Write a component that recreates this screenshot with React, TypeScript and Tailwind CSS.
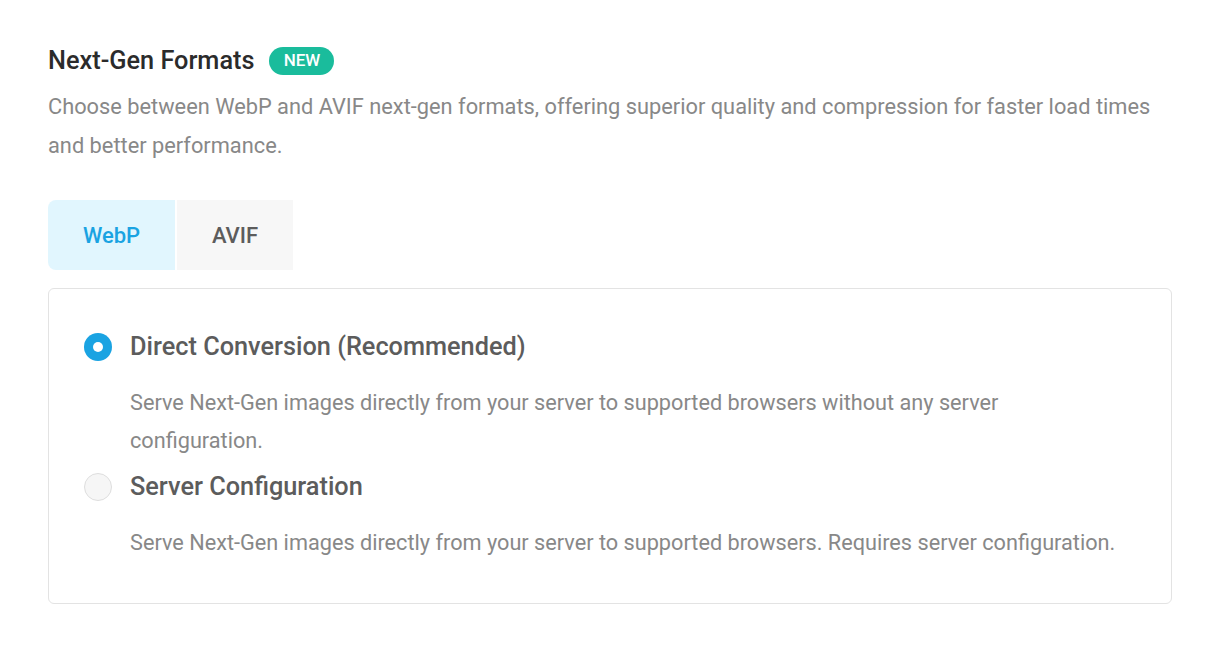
import { useState } from 'react';

type Format = 'webp' | 'avif';
type Mode = 'direct' | 'server';

const options: { id: Mode; label: string; desc: string }[] = [
  {
    id: 'direct',
    label: 'Direct Conversion (Recommended)',
    desc: 'Serve Next-Gen images directly from your server to supported browsers without any server configuration.',
  },
  {
    id: 'server',
    label: 'Server Configuration',
    desc: 'Serve Next-Gen images directly from your server to supported browsers. Requires server configuration.',
  },
];

function Radio({ checked }: { checked: boolean }) {
  return checked ? (
    <span className="flex items-center justify-center w-[28px] h-[28px] rounded-full bg-[#1aa3e2] shrink-0">
      <span className="w-[10px] h-[10px] rounded-full bg-white" />
    </span>
  ) : (
    <span className="w-[28px] h-[28px] rounded-full bg-[#f6f6f6] border border-[#dedede] shrink-0" />
  );
}

export default function App() {
  const [format, setFormat] = useState<Format>('webp');
  const [mode, setMode] = useState<Mode>('direct');

  return (
    <div className="min-h-screen bg-white font-['Roboto',sans-serif] px-[48px] pt-[47px]">
      <div className="flex items-center h-[28px]">
        <h2 className="text-[25.3px] font-medium text-[#2b2b2b] leading-[28px]">Next-Gen Formats</h2>
        <span className="ml-[15px] h-[28px] w-[65px] justify-center rounded-full bg-[#1abc9c] text-white text-[17px] font-medium flex items-center">
          NEW
        </span>
      </div>
      <p className="mt-[12px] text-[21.8px] leading-[39px] text-[#888] max-w-[1124px]">
        Choose between WebP and AVIF next-gen formats, offering superior quality and compression for faster load times and better performance.
      </p>

      <div className="mt-[35px] flex gap-[2px]">
        <button
          onClick={() => setFormat('webp')}
          className={`w-[127px] h-[70px] rounded-l-[8px] text-[22px] font-medium ${format === 'webp' ? 'bg-[#e1f6fe] text-[#1aa3e2]' : 'bg-[#f7f7f7] text-[#5c5c5c]'}`}
        >
          WebP
        </button>
        <button
          onClick={() => setFormat('avif')}
          className={`w-[116px] h-[70px] text-[22px] font-medium ${format === 'avif' ? 'bg-[#e1f6fe] text-[#1aa3e2]' : 'bg-[#f7f7f7] text-[#5c5c5c]'}`}
        >
          AVIF
        </button>
      </div>

      <div className="mt-[18px] w-[1124px] border border-[#e3e3e3] rounded-[6px] pl-[35px] pr-[24px] pt-[44px] pb-[41px]">
        {options.map((o, i) => (
          <div key={o.id} className={i > 0 ? 'mt-[13px]' : ''}>
            <label className="flex items-center gap-[18px] h-[28px] cursor-pointer" onClick={() => setMode(o.id)}>
              <Radio checked={mode === o.id} />
              <span className="text-[25.3px] font-medium text-[#5c5c5c] leading-[28px]">{o.label}</span>
            </label>
            <p className="mt-[23px] ml-[46px] text-[21.7px] leading-[38px] text-[#888] max-w-[1000px]">{o.desc}</p>
          </div>
        ))}
      </div>
    </div>
  );
}
